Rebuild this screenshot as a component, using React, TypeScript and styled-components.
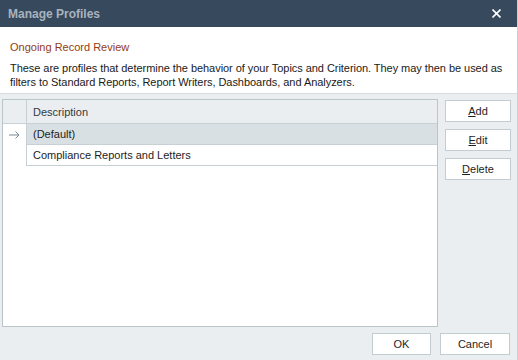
import React from "react";
import styled, { createGlobalStyle } from "styled-components";

const GlobalStyle = createGlobalStyle`
  html, body {
    margin: 0;
    padding: 0;
    background: #ffffff;
  }
  body {
    font-family: "Liberation Sans", Arial, sans-serif;
    font-size: 11px;
    color: #1e1e1e;
  }
`;

const Window = styled.div`
  width: 518px;
  height: 360px;
  display: flex;
  flex-direction: column;
  box-sizing: border-box;
  border-right: 1px solid #c9d0d4;
  overflow: hidden;
`;

const TitleBar = styled.div`
  height: 27px;
  flex: none;
  display: flex;
  align-items: center;
  justify-content: space-between;
  padding: 0 16px 0 8px;
  background: #37495c;
`;

const Title = styled.span`
  font-weight: bold;
  font-size: 12px;
  color: #a8b3bf;
`;

const CloseIcon = styled.svg`
  width: 9px;
  height: 9px;
  display: block;
`;

const Intro = styled.div`
  height: 66px;
  flex: none;
  box-sizing: border-box;
  padding: 13px 10px 0 10px;
  background: #ffffff;
`;

const Heading = styled.div`
  color: #953c10;
  line-height: 14px;
  margin-bottom: 7px;
`;

const Blurb = styled.div`
  line-height: 14px;
  color: #1a1a1a;
  white-space: nowrap;
  letter-spacing: -0.05px;
`;

const Body = styled.div`
  flex: 1;
  display: flex;
  flex-direction: column;
  background: #ebeef0;
  border-top: 1px solid #d5dbde;
  padding: 5px 6px 5px 2px;
  gap: 6px;
  min-height: 0;
`;

const Main = styled.div`
  flex: 1;
  display: flex;
  gap: 7px;
  min-height: 0;
`;

const Grid = styled.div`
  flex: 1;
  display: flex;
  flex-direction: column;
  background: #ffffff;
  border: 1px solid #bac5ca;
`;

const GridRow = styled.div<{ $head?: boolean }>`
  display: flex;
  height: ${(p) => (p.$head ? "24px" : "21px")};
  background: ${(p) => (p.$head ? "#ebeef0" : "transparent")};
`;

const Indicator = styled.div<{ $head?: boolean }>`
  width: 23px;
  flex: none;
  border-right: 1px solid #c7d0d4;
  border-bottom: ${(p) => (p.$head ? "1px solid #c7d0d4" : "none")};
  display: flex;
  align-items: center;
  justify-content: center;
`;

const Arrow = styled.svg`
  width: 11px;
  height: 8px;
  display: block;
`;

const Cell = styled.div<{ $head?: boolean; $selected?: boolean }>`
  flex: 1;
  display: flex;
  align-items: center;
  padding-left: 6px;
  border-bottom: 1px solid #c7d0d4;
  background: ${(p) => (p.$selected ? "#d9e0e3" : "transparent")};
  color: ${(p) => (p.$head ? "#333b40" : "#1e1e1e")};
`;

const Buttons = styled.div`
  width: 66px;
  flex: none;
  display: flex;
  flex-direction: column;
  gap: 7px;
  padding-top: 1px;
`;

const Button = styled.button<{ $width?: number }>`
  height: 22px;
  width: ${(p) => (p.$width ? `${p.$width}px` : "100%")};
  box-sizing: border-box;
  background: #ffffff;
  border: 1px solid #c3ccd0;
  font-family: "Liberation Sans", Arial, sans-serif;
  font-size: 11px;
  color: #1e1e1e;
  padding: 0;
  cursor: pointer;
`;

const Key = styled.span`
  text-decoration: underline;
`;

const Footer = styled.div`
  display: flex;
  justify-content: flex-end;
  gap: 9px;
  padding-right: 1px;
`;

const rows = [
  { name: "(Default)", current: true },
  { name: "Compliance Reports and Letters", current: false },
];

export default function App() {
  return (
    <>
      <GlobalStyle />
      <Window>
        <TitleBar>
          <Title>Manage Profiles</Title>
          <CloseIcon viewBox="0 0 9 9">
            <path d="M0.5 0.5 L8.5 8.5 M8.5 0.5 L0.5 8.5" stroke="#ffffff" strokeWidth="1.6" />
          </CloseIcon>
        </TitleBar>
        <Intro>
          <Heading>Ongoing Record Review</Heading>
          <Blurb>
            These are profiles that determine the behavior of your Topics and Criterion. They may then be used as
            <br />
            filters to Standard Reports, Report Writers, Dashboards, and Analyzers.
          </Blurb>
        </Intro>
        <Body>
          <Main>
            <Grid>
              <GridRow $head>
                <Indicator $head />
                <Cell $head>Description</Cell>
              </GridRow>
              {rows.map((r) => (
                <GridRow key={r.name}>
                  <Indicator>
                    {r.current && (
                      <Arrow viewBox="0 0 11 8">
                        <path d="M0 4 H10 M6.5 0.5 L10 4 L6.5 7.5" stroke="#7d8b95" strokeWidth="1" fill="none" />
                      </Arrow>
                    )}
                  </Indicator>
                  <Cell $selected={r.current}>{r.name}</Cell>
                </GridRow>
              ))}
            </Grid>
            <Buttons>
              <Button><Key>A</Key>dd</Button>
              <Button><Key>E</Key>dit</Button>
              <Button><Key>D</Key>elete</Button>
            </Buttons>
          </Main>
          <Footer>
            <Button $width={59}>OK</Button>
            <Button $width={70}>Cancel</Button>
          </Footer>
        </Body>
      </Window>
    </>
  );
}
